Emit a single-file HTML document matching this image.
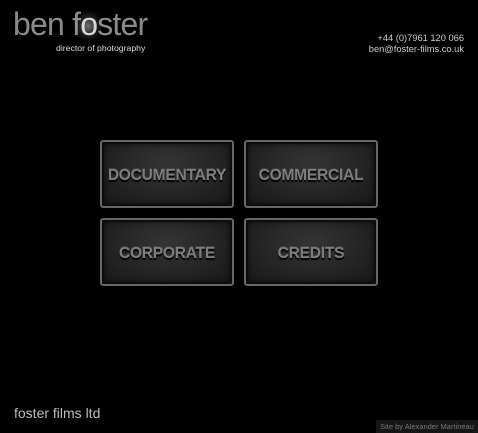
<!DOCTYPE html>
<html><head><meta charset="utf-8"><style>
html,body{margin:0;padding:0;background:#000;width:478px;height:433px;overflow:hidden;font-family:"Liberation Sans",sans-serif;position:relative}
.logo{position:absolute;left:13px;top:4px;font-size:32px;color:#8a8a8a;letter-spacing:-0.8px;line-height:40px}
.logo .o{position:relative;display:inline-block;color:#ccc}
.logo .o:before{content:"";position:absolute;left:-8px;top:6px;width:32px;height:32px;border-radius:50%;background:radial-gradient(circle,rgba(255,255,255,0.45) 0%,rgba(255,255,255,0.12) 40%,rgba(0,0,0,0) 70%)}
.sub{position:absolute;left:56px;top:43px;font-size:8.7px;color:#ddd}
.contact{position:absolute;right:14px;top:33px;font-size:9.3px;color:#ccc;text-align:right;line-height:11px}
.btn{position:absolute;width:130px;height:64px;box-sizing:content-box;border:2px solid #666;border-radius:3px;background:radial-gradient(ellipse at 50% 35%,#343434 0%,#232323 60%,#181818 100%);box-shadow:inset 0 0 0 2px #0c0c0c,inset 0 0 8px #000;display:flex;align-items:center;justify-content:center;font-weight:bold;font-size:15.5px;color:#7d7d7d;text-shadow:0 2px 1px #000,0 -1px 0 #444;letter-spacing:-0.2px;line-height:64px;padding-top:0}
.btn span{position:relative;top:2px}
.foot{position:absolute;left:14px;top:405px;font-size:14px;color:#bbb}
.site{position:absolute;left:376px;top:420px;width:102px;height:13px;background:#161616;color:#777;font-size:7.5px;line-height:13px;text-align:center}
</style></head><body>
<div class="logo">ben f<span class="o">o</span>ster</div>
<div class="sub">director of photography</div>
<div class="contact">+44 (0)7961 120 066<br>ben@foster-films.co.uk</div>
<div class="btn" style="left:100px;top:140px"><span>DOCUMENTARY</span></div>
<div class="btn" style="left:244px;top:140px"><span>COMMERCIAL</span></div>
<div class="btn" style="left:100px;top:218px"><span>CORPORATE</span></div>
<div class="btn" style="left:244px;top:218px"><span>CREDITS</span></div>
<div class="foot">foster films ltd</div>
<div class="site">Site by Alexander Martineau</div>
</body></html>
